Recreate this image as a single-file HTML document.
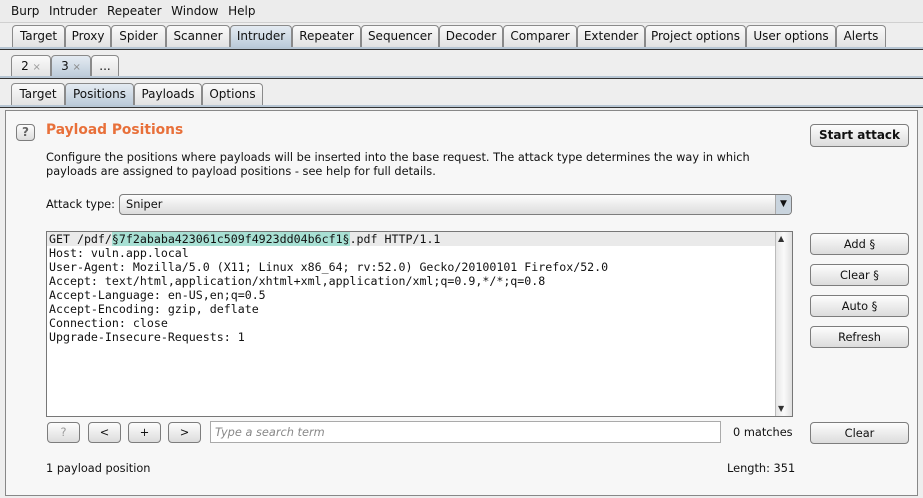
<!DOCTYPE html>
<html><head><style>
*{box-sizing:border-box;margin:0;padding:0}
body{width:923px;height:498px;background:#eeeeee;font-family:"DejaVu Sans","Liberation Sans",sans-serif;font-size:11.35px;color:#111;position:relative;overflow:hidden}
.a{position:absolute;white-space:nowrap}
.tab{position:absolute;height:22px;border:1px solid #8a8a8a;border-bottom:none;border-radius:4px 4px 0 0;background:linear-gradient(#fafafa,#e2e2e2);text-align:center;line-height:21px;font-size:12px}
.sel{background:linear-gradient(#e4ebf2,#bccbd9)}
.band{position:absolute;left:0;width:923px;height:3px;background:#b7c6d4;border-bottom:1px solid #333}
.btn{position:absolute;border:1px solid #7d7d7d;border-radius:4px;background:linear-gradient(#fdfdfd,#dcdcdc);text-align:center;font-size:11.35px}
.mono{font-family:"DejaVu Sans Mono","Liberation Mono",monospace;font-size:11.62px}
</style></head><body>
<div class="a" style="left:0;top:0;width:923px;height:23px;background:#ececec;border-bottom:1px solid #d0d0d0"></div>
<div class="a" style="left:11px;top:4px;font-size:12px;word-spacing:1px">Burp&nbsp; Intruder&nbsp; Repeater&nbsp; Window&nbsp; Help</div>

<div class="tab" style="left:12px;top:25px;width:53px">Target</div>
<div class="tab" style="left:65px;top:25px;width:46px">Proxy</div>
<div class="tab" style="left:111px;top:25px;width:55px">Spider</div>
<div class="tab" style="left:166px;top:25px;width:64px">Scanner</div>
<div class="tab sel" style="left:230px;top:25px;width:62px">Intruder</div>
<div class="tab" style="left:292px;top:25px;width:69px">Repeater</div>
<div class="tab" style="left:361px;top:25px;width:78px">Sequencer</div>
<div class="tab" style="left:439px;top:25px;width:64px">Decoder</div>
<div class="tab" style="left:503px;top:25px;width:74px">Comparer</div>
<div class="tab" style="left:577px;top:25px;width:68px">Extender</div>
<div class="tab" style="left:645px;top:25px;width:101px">Project options</div>
<div class="tab" style="left:746px;top:25px;width:90px">User options</div>
<div class="tab" style="left:836px;top:25px;width:50px">Alerts</div>
<div class="band" style="top:47px"></div>

<div class="tab" style="left:11px;top:55px;width:40px">2 <span style="color:#999;font-size:10px">×</span></div>
<div class="tab sel" style="left:51px;top:55px;width:40px">3 <span style="color:#888;font-size:10px">×</span></div>
<div class="tab" style="left:91px;top:55px;width:28px">...</div>
<div class="band" style="top:76px"></div>

<div class="tab" style="left:11px;top:83px;width:54px">Target</div>
<div class="tab sel" style="left:65px;top:83px;width:69px">Positions</div>
<div class="tab" style="left:134px;top:83px;width:68px">Payloads</div>
<div class="tab" style="left:202px;top:83px;width:61px">Options</div>
<div class="band" style="top:105px"></div>

<div class="a" style="left:5px;top:110px;width:913px;height:386px;background:#f7f7f7;border:1px solid #888"></div>
<div class="btn" style="left:16px;top:124px;width:19px;height:17px;line-height:15px;color:#666;font-weight:bold;font-size:12px">?</div>
<div class="a" style="left:46px;top:122px;color:#e8703a;font-weight:bold;font-size:13.8px">Payload Positions</div>
<div class="a" style="left:46px;top:150px;line-height:14px">Configure the positions where payloads will be inserted into the base request. The attack type determines the way in which<br>payloads are assigned to payload positions - see help for full details.</div>
<div class="btn" style="left:810px;top:124px;width:99px;height:23px;line-height:21px;font-weight:bold;font-size:12px">Start attack</div>

<div class="a" style="left:46px;top:197px">Attack type:</div>
<div class="btn" style="left:119px;top:194px;width:673px;height:21px;line-height:19px;text-align:left;padding-left:6px">Sniper</div>
<div class="a" style="left:775px;top:195px;width:16px;height:19px;border-left:1px solid #aaa;background:#c9d4de;font-size:9px;text-align:center;line-height:19px;border-radius:0 3px 3px 0">▼</div>

<div class="a" style="left:46px;top:231px;width:747px;height:186px;background:#fff;border:1px solid #777"></div>
<div class="a" style="left:47px;top:232px;width:728px;height:14px;background:#eaeaea"></div>
<div class="a" style="left:775px;top:232px;width:17px;height:184px;background:linear-gradient(90deg,#e6e6e6,#fafafa,#e0e0e0);border-left:1px solid #bbb"></div>
<div class="a" style="left:778px;top:234px;font-size:8px;color:#333">▲</div>
<div class="a" style="left:778px;top:404px;font-size:8px;color:#333">▼</div>
<div class="a mono" style="left:49px;top:232px;line-height:14px">GET /pdf/<span style="background:#a8e0d4">§7f2ababa423061c509f4923dd04b6cf1§</span>.pdf HTTP/1.1<br>Host: vuln.app.local<br>User-Agent: Mozilla/5.0 (X11; Linux x86_64; rv:52.0) Gecko/20100101 Firefox/52.0<br>Accept: text/html,application/xhtml+xml,application/xml;q=0.9,*/*;q=0.8<br>Accept-Language: en-US,en;q=0.5<br>Accept-Encoding: gzip, deflate<br>Connection: close<br>Upgrade-Insecure-Requests: 1</div>

<div class="btn" style="left:810px;top:233px;width:99px;height:22px;line-height:20px">Add §</div>
<div class="btn" style="left:810px;top:264px;width:99px;height:22px;line-height:20px">Clear §</div>
<div class="btn" style="left:810px;top:295px;width:99px;height:22px;line-height:20px">Auto §</div>
<div class="btn" style="left:810px;top:326px;width:99px;height:22px;line-height:20px">Refresh</div>

<div class="btn" style="left:47px;top:422px;width:33px;height:21px;line-height:19px;color:#999">?</div>
<div class="btn" style="left:88px;top:422px;width:33px;height:21px;line-height:19px">&lt;</div>
<div class="btn" style="left:128px;top:422px;width:33px;height:21px;line-height:19px">+</div>
<div class="btn" style="left:168px;top:422px;width:33px;height:21px;line-height:19px">&gt;</div>
<div class="a" style="left:210px;top:421px;width:511px;height:22px;background:#fff;border:1px solid #aaa;padding-left:4px;line-height:20px;font-style:italic;color:#888">Type a search term</div>
<div class="a" style="left:733px;top:425px">0 matches</div>
<div class="btn" style="left:810px;top:422px;width:99px;height:22px;line-height:20px">Clear</div>

<div class="a" style="left:46px;top:461px">1 payload position</div>
<div class="a" style="left:727px;top:461px">Length: 351</div>
</body></html>
